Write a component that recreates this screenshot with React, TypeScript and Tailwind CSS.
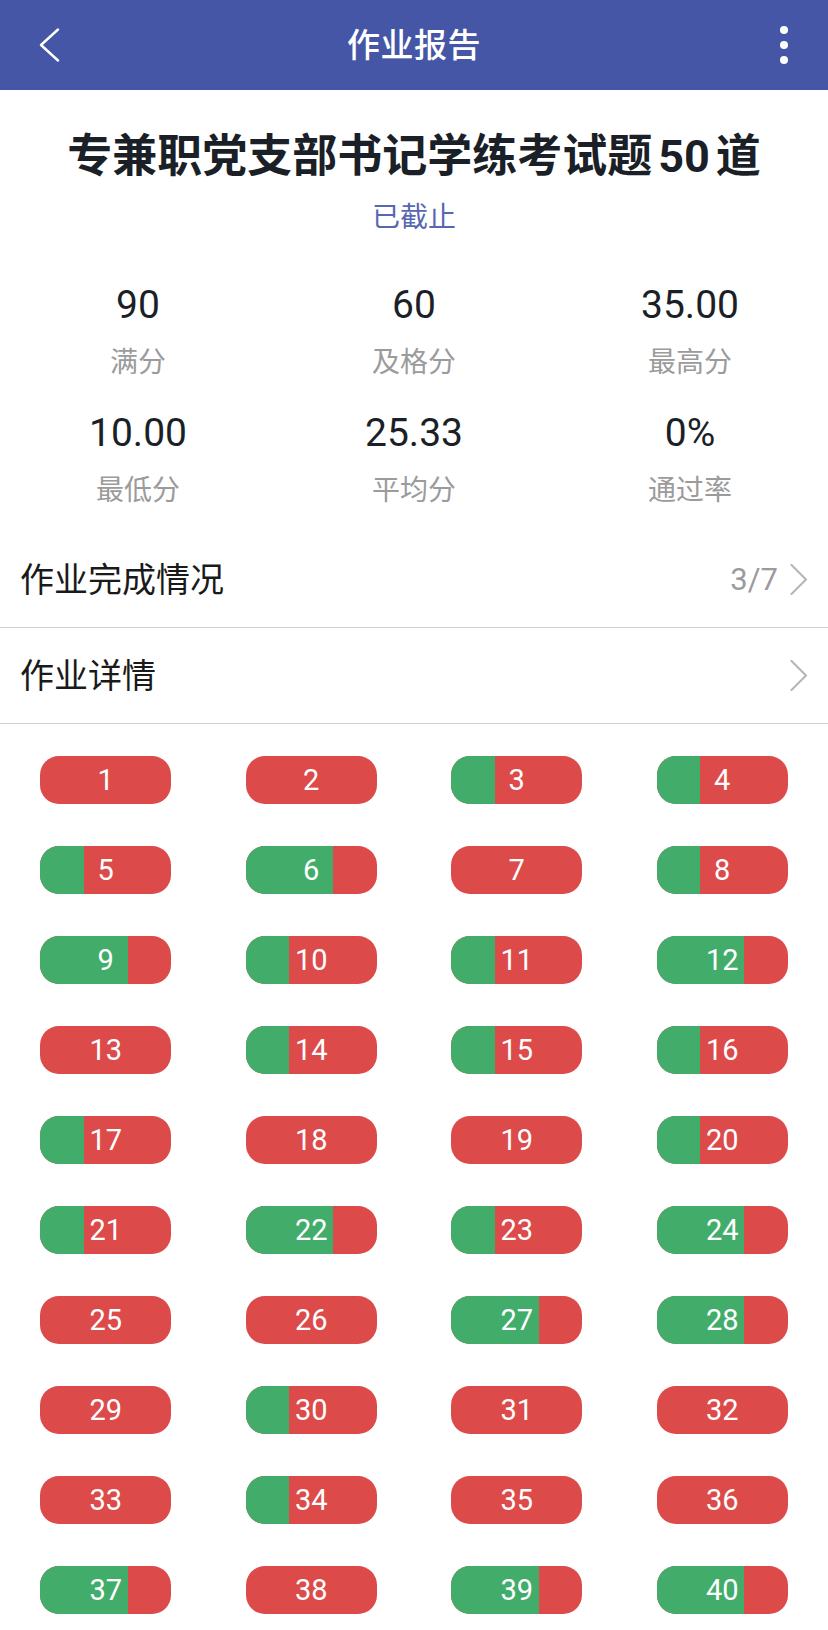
import React from "react";

const fracs: number[] = [
  0, 0, 1, 1,
  1, 2, 0, 1,
  2, 1, 1, 2,
  0, 1, 1, 1,
  1, 0, 0, 1,
  1, 2, 1, 2,
  0, 0, 2, 2,
  0, 1, 0, 0,
  0, 1, 0, 0,
  2, 0, 2, 2,
];

const stats = [
  { v: "90", l: "满分" },
  { v: "60", l: "及格分" },
  { v: "35.00", l: "最高分" },
  { v: "10.00", l: "最低分" },
  { v: "25.33", l: "平均分" },
  { v: "0%", l: "通过率" },
];

const FONT = { fontFamily: 'Roboto, "Noto Sans CJK SC", sans-serif' };

function Chevron() {
  return (
    <svg width="18" height="31" viewBox="0 0 18 31" fill="none">
      <polyline
        points="1.5,1 16,15.5 1.5,30"
        stroke="#b3b3b3"
        strokeWidth="2"
        strokeLinecap="round"
        strokeLinejoin="round"
      />
    </svg>
  );
}

export default function App() {
  return (
    <div className="w-[828px] h-[1630px] overflow-hidden bg-white" style={FONT}>
      {/* Header */}
      <div className="h-[90px] bg-[#4556a6] flex items-center justify-between relative">
        <div className="w-[90px] h-[90px] flex items-center pl-[39px]">
          <svg width="21" height="34" viewBox="0 0 21 34" fill="none">
            <polyline
              points="19,1.5 2,17 19,32.5"
              stroke="#ffffff"
              strokeWidth="2.4"
              strokeLinecap="round"
              strokeLinejoin="round"
            />
          </svg>
        </div>
        <div className="text-white text-[33px] font-medium leading-none tracking-[0.5px]">作业报告</div>
        <div className="w-[90px] h-[90px] flex flex-col items-end justify-center pr-[40px] gap-[7px]">
          <div className="w-[8px] h-[8px] rounded-full bg-white" />
          <div className="w-[8px] h-[8px] rounded-full bg-white" />
          <div className="w-[8px] h-[8px] rounded-full bg-white" />
        </div>
      </div>

      {/* Title */}
      <div className="mt-[38px] h-[56px] flex items-center justify-center text-[45px] font-bold text-[#1b1f27] leading-none">
        <span>专兼职党支部书记学练考试题</span>
        <span className="mx-[6px]">50</span>
        <span>道</span>
      </div>
      <div className="mt-[14px] h-[40px] flex items-center justify-center text-[28px] text-[#5767b2] leading-none">
        已截止
      </div>

      {/* Stats */}
      <div className="mt-[43px] grid grid-cols-3 gap-y-[26px]">
        {stats.map((s) => (
          <div key={s.l} className="flex flex-col items-center">
            <div className="h-[48px] flex items-center text-[39px] text-[#1b1f27] leading-none">{s.v}</div>
            <div className="mt-[14px] h-[40px] flex items-center text-[28px] text-[#9b9b9b] leading-none">{s.l}</div>
          </div>
        ))}
      </div>

      {/* Rows */}
      <div className="mt-[21px]">
        <div className="h-[96px] border-b border-[#cfcfcf] flex items-center justify-between pl-[20px] pr-[20px]">
          <div className="text-[34px] text-[#1a1a1a] leading-none">作业完成情况</div>
          <div className="flex items-center gap-[12px]">
            <span className="text-[31px] text-[#9b9b9b] leading-none">3/7</span>
            <Chevron />
          </div>
        </div>
        <div className="h-[96px] border-b border-[#cfcfcf] flex items-center justify-between pl-[20px] pr-[20px]">
          <div className="text-[34px] text-[#1a1a1a] leading-none">作业详情</div>
          <Chevron />
        </div>
      </div>

      {/* Grid */}
      <div className="pt-[32px] px-[3px] grid grid-cols-4 gap-y-[42px]">
        {fracs.map((f, i) => (
          <div key={i} className="flex justify-center">
            <div className="relative w-[131px] h-[48px] rounded-[19px] overflow-hidden bg-[#dc4a4a] flex items-center justify-center">
              {f > 0 && (
                <div
                  className="absolute left-0 top-0 bottom-0 bg-[#42ad6b]"
                  style={{ width: `${(131 * f) / 3}px` }}
                />
              )}
              <span className="relative text-white text-[29px] leading-none">{i + 1}</span>
            </div>
          </div>
        ))}
      </div>
    </div>
  );
}
